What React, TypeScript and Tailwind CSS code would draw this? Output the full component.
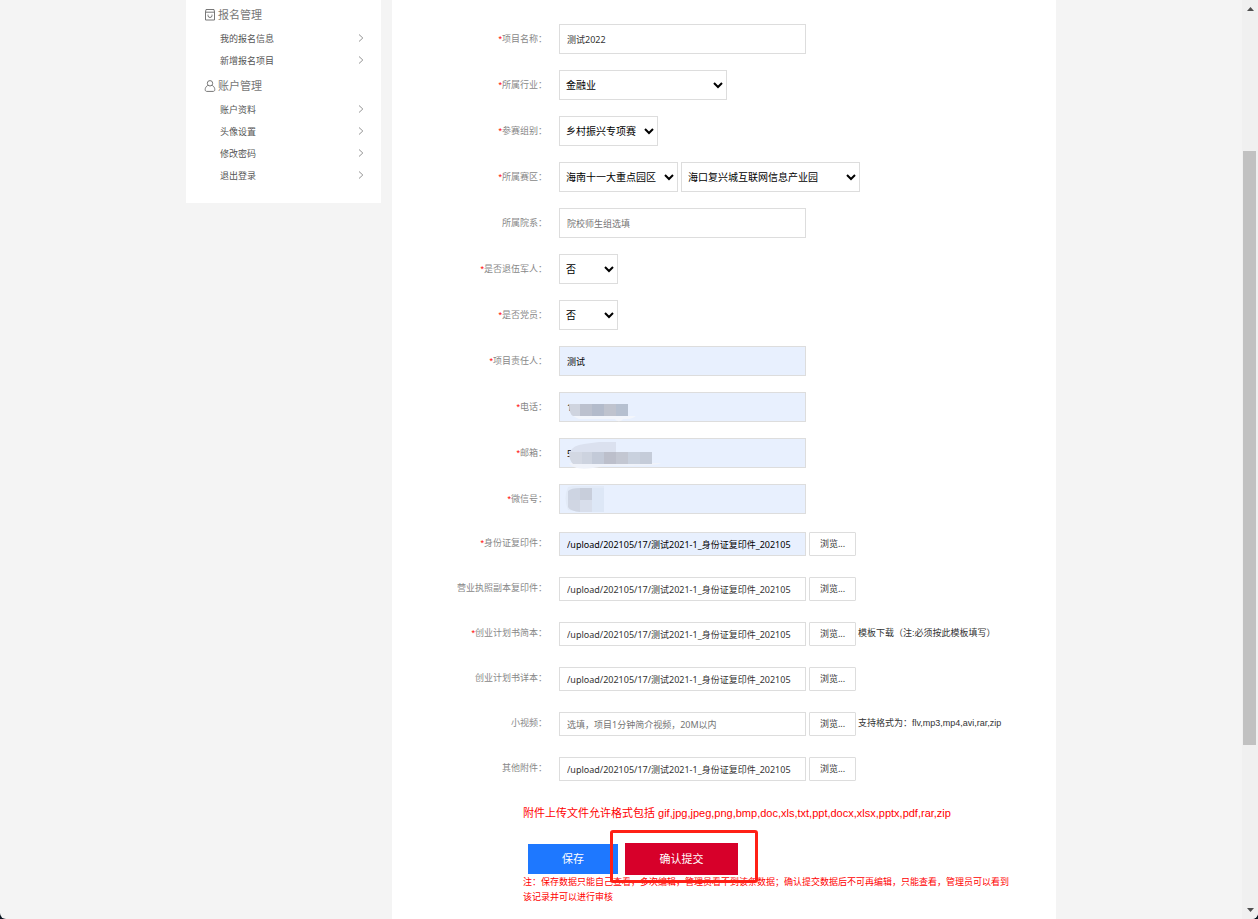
import { useState } from 'react';
import type { ReactNode } from 'react';

const MENU = [
  { title: '报名管理', icon: 'bag', items: ['我的报名信息', '新增报名项目'] },
  { title: '账户管理', icon: 'user', items: ['账户资料', '头像设置', '修改密码', '退出登录'] },
];

const UPLOAD_PATH = '/upload/202105/17/测试2021-1_身份证复印件_202105';

const FILES = [
  { id: 'idcard', label: '身份证复印件', required: true, filled: true, value: UPLOAD_PATH },
  { id: 'license', label: '营业执照副本复印件', value: UPLOAD_PATH },
  { id: 'planShort', label: '创业计划书简本', required: true, value: UPLOAD_PATH, link: '模板下载（注:必须按此模板填写）' },
  { id: 'planFull', label: '创业计划书详本', value: UPLOAD_PATH },
  { id: 'video', label: '小视频', value: '', placeholder: '选填，项目1分钟简介视频，20M以内', note: '支持格式为：flv,mp3,mp4,avi,rar,zip' },
  { id: 'other', label: '其他附件', value: UPLOAD_PATH },
];

const inputFont = "font-['Noto_Sans','Noto_Sans_CJK_SC',sans-serif]";

function BagIcon() {
  return (
    <svg width="12" height="12" viewBox="0 0 12 12" fill="none" stroke="#777" strokeWidth="1" className="-translate-y-px">
      <path d="M2 .5h8l.5 2.5v8h-9V3zM1 3.2h10" />
      <path d="M4 5.6v.9a2 2 0 0 0 4 0v-.9" />
    </svg>
  );
}

function UserIcon() {
  return (
    <svg width="12" height="12" viewBox="0 0 12 12" fill="none" stroke="#777" strokeWidth="1" className="-translate-y-px">
      <circle cx="6" cy="3.3" r="2.7" />
      <path d="M3.8 5.4C2 6.4 1.2 8 1.2 9.6c0 1.2.6 1.8 1.6 1.8h6.4c1 0 1.6-.6 1.6-1.8 0-1.6-.8-3.2-2.6-4.2" />
    </svg>
  );
}

function Sidebar() {
  return (
    <aside className="w-[195px] shrink-0 self-start bg-white pt-0.5 pb-[15px]">
      {MENU.map((group) => (
        <nav key={group.title} aria-label={group.title}>
          <h2 className="flex h-[27px] items-center gap-0.5 pl-[18px] text-[11px] text-[#777]">
            {group.icon === 'bag' ? <BagIcon /> : <UserIcon />}
            {group.title}
          </h2>
          <ul>
            {group.items.map((item) => (
              <li key={item}>
                <a href="#" className="flex h-[22px] items-center justify-between pr-[17px] pl-[34px] text-[9px] text-[#555]">
                  {item}
                  <svg width="6" height="8" viewBox="0 0 6 8" fill="none" stroke="#888" strokeWidth="0.9" className="-translate-y-0.5">
                    <path d="M1 .5 4.8 4 1 7.5" />
                  </svg>
                </a>
              </li>
            ))}
          </ul>
        </nav>
      ))}
    </aside>
  );
}

function Row({ id, label, required, children }: { id: string; label: string; required?: boolean; children: ReactNode }) {
  return (
    <div className="flex items-center">
      <label htmlFor={id} className="mr-3 w-[155px] shrink-0 text-right text-[9px] leading-4 text-[#888]">
        {required && <span className="text-[#f00]">*</span>}
        {label}：
      </label>
      {children}
    </div>
  );
}

function TextField({ id, value = '', placeholder, filled, children }: { id: string; value?: string; placeholder?: string; filled?: boolean; children?: ReactNode }) {
  return (
    <div className="relative">
      <input
        id={id}
        type="text"
        defaultValue={value}
        placeholder={placeholder}
        className={`block h-[30px] w-[247px] border border-[#ddd] pl-[7px] text-[9px] placeholder:text-[#757575] ${inputFont} ${filled ? 'bg-[#e8f0fe] text-black' : 'bg-white text-[#333]'}`}
      />
      {children}
    </div>
  );
}

function SelectField({ id, label, option, width }: { id: string; label?: string; option: string; width: string }) {
  return (
    <select id={id} aria-label={label} className={`h-[30px] border border-[#ddd] bg-white pl-0.5 text-[10px] text-black ${width}`}>
      <option>{option}</option>
    </select>
  );
}

function PhoneMask() {
  return (
    <svg className="pointer-events-none absolute top-2.5 left-2.5" width="68" height="20" viewBox="0 0 68 20">
      <path d="M4 14h63c-4 3-8 3-13 3-2 3-6 3-8 0H10z" fill="#f3f6fc" />
      <path d="M0 2h11v12H4Q0 12 0 2z" fill="#cfd4df" />
      <path d="M11 2h12v12H11z" fill="#bcc1ce" />
      <path d="M23 2h12v12H23z" fill="#b3bbcb" />
      <path d="M35 2h12v12H35z" fill="#bfc3ce" />
      <path d="M47 2h12v12H47z" fill="#b6c0d0" />
    </svg>
  );
}

function MailMask() {
  return (
    <svg className="pointer-events-none absolute top-1 left-2.5" width="94" height="28" viewBox="0 0 94 28">
      <path d="M1 10Q4 3 15 2L30 0h17v10z" fill="#dbe1ef" />
      <path d="M0 21h92c-5 4-40 2-58 3C18 28 4 28 0 21z" fill="#f0f3fa" />
      <path d="M0 10h13v12H4Q0 18 0 10z" fill="#d3d8e3" />
      <path d="M13 10h10v12H13z" fill="#cdd3df" />
      <path d="M23 10h12v12H23z" fill="#c3cad8" />
      <path d="M35 10h12v12H35z" fill="#bcbfcb" />
      <path d="M47 10h12v12H47z" fill="#c3c7d2" />
      <path d="M59 10h12v12H59z" fill="#c9d1de" />
      <path d="M71 10h12v12H71z" fill="#c5ccd9" />
    </svg>
  );
}

function WechatMask() {
  return (
    <svg className="pointer-events-none absolute top-0.5 left-1" width="60" height="26" viewBox="0 0 60 26">
      <path d="M5 1Q0 12 5 24l12 2h24V0H10z" fill="#e2eaf7" />
      <path d="M5 5Q8 2 17 2v12H5z" fill="#cdd4e2" />
      <path d="M17 2h12v12H17z" fill="#c8cedb" />
      <path d="M5 14h12v12Q7 25 5 21z" fill="#d0d6e3" />
      <path d="M17 14h12v12H17z" fill="#d8deeb" />
      <path d="M29 2h12v24H29z" fill="#dde7f6" />
    </svg>
  );
}

function Scrollbar() {
  return (
    <div className="sticky top-0 grid h-screen w-4 shrink-0 grid-rows-[151fr_594fr_174fr] bg-[#f0f0f0]" aria-hidden="true">
      <svg className="mt-[7px] ml-[5px]" width="7" height="4" viewBox="0 0 7 4">
        <path d="M0 4 3.5 0 7 4z" fill="#505050" />
      </svg>
      <div className="mr-0.5 ml-px bg-[#c1c1c1]" />
      <svg className="mb-[7px] ml-[5px] self-end" width="7" height="4" viewBox="0 0 7 4">
        <path d="M0 0h7L3.5 4z" fill="#505050" />
      </svg>
    </div>
  );
}

export default function App() {
  const [status, setStatus] = useState('editing');

  const handleSubmit = (e: React.FormEvent) => {
    e.preventDefault();
    setStatus('submitted');
  };

  return (
    <div className="bg-[#0b1722]">
      <div className="flex min-h-screen overflow-clip rounded-b-md bg-[#f4f4f4] font-['Liberation_Sans','Noto_Sans_CJK_SC',sans-serif]">
        <div className="mx-auto flex max-w-[870px] flex-1 gap-[11px]">
          <Sidebar />
          <main className="min-w-0 flex-1 bg-white">
            <form onSubmit={handleSubmit} data-status={status} className="pt-6">
              <div className="flex flex-col gap-4">
                <Row id="name" label="项目名称" required>
                  <TextField id="name" value="测试2022" />
                </Row>
                <Row id="industry" label="所属行业" required>
                  <SelectField id="industry" option="金融业" width="w-[168px]" />
                </Row>
                <Row id="group" label="参赛组别" required>
                  <SelectField id="group" option="乡村振兴专项赛" width="w-[99px]" />
                </Row>
                <Row id="area" label="所属赛区" required>
                  <div className="flex gap-[3px]">
                    <SelectField id="area" option="海南十一大重点园区" width="w-[119px]" />
                    <SelectField id="park" label="园区" option="海口复兴城互联网信息产业园" width="w-[179px]" />
                  </div>
                </Row>
                <Row id="college" label="所属院系">
                  <TextField id="college" placeholder="院校师生组选填" />
                </Row>
                <Row id="veteran" label="是否退伍军人" required>
                  <SelectField id="veteran" option="否" width="w-[59px]" />
                </Row>
                <Row id="party" label="是否党员" required>
                  <SelectField id="party" option="否" width="w-[59px]" />
                </Row>
                <Row id="owner" label="项目责任人" required>
                  <TextField id="owner" value="测试" filled />
                </Row>
                <Row id="phone" label="电话" required>
                  <TextField id="phone" value="1" filled>
                    <PhoneMask />
                  </TextField>
                </Row>
                <Row id="email" label="邮箱" required>
                  <TextField id="email" value="5" filled>
                    <MailMask />
                  </TextField>
                </Row>
                <Row id="wechat" label="微信号" required>
                  <TextField id="wechat" filled>
                    <WechatMask />
                  </TextField>
                </Row>
              </div>

              <div className="mt-[18px] flex flex-col gap-[21px] [&_label]:pb-0.5">
                {FILES.map((file) => (
                  <Row key={file.id} id={file.id} label={file.label} required={file.required}>
                    <input
                      id={file.id}
                      type="text"
                      defaultValue={file.value}
                      placeholder={file.placeholder}
                      className={`h-6 w-[247px] border border-[#ddd] px-[7px] text-[9px] placeholder:text-[#757575] ${inputFont} ${file.filled ? 'bg-[#e8f0fe] text-black' : 'bg-white text-[#333]'}`}
                    />
                    <button type="button" className={`ml-[3px] h-6 w-[47px] rounded-[1px] border border-[#ddd] bg-white text-[9px] text-[#333] ${inputFont}`}>
                      浏览...
                    </button>
                    {file.link && <a href="#" className="ml-0.5 text-[9px] text-[#333]">{file.link}</a>}
                    {file.note && <span className="ml-0.5 text-[9px] text-[#333]">{file.note}</span>}
                  </Row>
                ))}
              </div>

              <div className="ml-[131px] text-[#f00]">
                <p className="mt-6 text-[11px] leading-4">附件上传文件允许格式包括 gif,jpg,jpeg,png,bmp,doc,xls,txt,ppt,docx,xlsx,pptx,pdf,rar,zip</p>
                <div className="mt-[22px] flex items-center gap-[7px] pl-[5px] text-[11px] text-white">
                  <button type="button" onClick={() => setStatus('saved')} className="h-[30px] w-[90px] bg-[#1e78ff]">
                    保存
                  </button>
                  <div className="relative">
                    <button type="submit" className="block h-8 w-[113px] bg-[#d7002a]">
                      确认提交
                    </button>
                    <div className="pointer-events-none absolute -top-[13px] -right-5 -bottom-2 -left-[15px] rounded-[3px] border-3 border-[#ff2015]" />
                  </div>
                </div>
                <p className="max-w-[490px] text-[9px] leading-[15px]">
                  注：保存数据只能自己查看，多次编辑，管理员看不到该条数据；确认提交数据后不可再编辑，只能查看，管理员可以看到该记录并可以进行审核
                </p>
              </div>
            </form>
          </main>
        </div>
        <Scrollbar />
      </div>
    </div>
  );
}
